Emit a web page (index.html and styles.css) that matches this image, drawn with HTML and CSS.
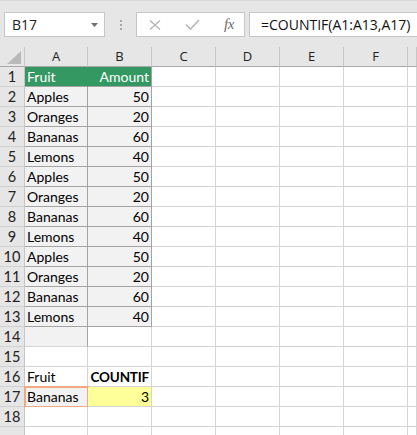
FILE: index.html
```html
<!DOCTYPE html>
<html>
<head>
<meta charset="utf-8">
<link rel="stylesheet" href="styles.css">
</head>
<body>
<div class="app">
  <div class="toolbar">
    <div class="namebox">
      <span class="name">B17</span>
      <svg class="dd" width="7" height="4" viewBox="0 0 7 4"><polygon points="0,0 7,0 3.5,4" fill="#707070"/></svg>
    </div>
    <div class="dots"><i></i><i></i><i></i></div>
    <div class="btns">
      <svg class="ico" width="12" height="10" viewBox="0 0 12 10"><path d="M1 0.5 L11 9.5 M11 0.5 L1 9.5" stroke="#b5b5b5" stroke-width="1.4" fill="none"/></svg>
      <svg class="ico" width="15" height="11" viewBox="0 0 15 11"><path d="M1 5.5 L5.5 10 L14 1" stroke="#b5b5b5" stroke-width="1.6" fill="none"/></svg>
      <span class="fx">fx</span>
    </div>
    <div class="formula">=COUNTIF(A1:A13,A17)</div>
  </div>
  <div class="grid">
    <div class="corner"><svg width="14" height="13" viewBox="0 0 14 13"><polygon points="14,0 14,13 0,13" fill="#b9b9b9"/></svg></div>
    <div class="ch">A</div><div class="ch">B</div><div class="ch">C</div><div class="ch">D</div><div class="ch">E</div><div class="ch">F</div><div class="ch last"></div>

    <div class="rh">1</div><div class="c g">Fruit</div><div class="c g r">Amount</div><div class="c"></div><div class="c"></div><div class="c"></div><div class="c"></div><div class="c last"></div>
    <div class="rh">2</div><div class="c t">Apples</div><div class="c t r">50</div><div class="c"></div><div class="c"></div><div class="c"></div><div class="c"></div><div class="c last"></div>
    <div class="rh">3</div><div class="c t">Oranges</div><div class="c t r">20</div><div class="c"></div><div class="c"></div><div class="c"></div><div class="c"></div><div class="c last"></div>
    <div class="rh">4</div><div class="c t">Bananas</div><div class="c t r">60</div><div class="c"></div><div class="c"></div><div class="c"></div><div class="c"></div><div class="c last"></div>
    <div class="rh">5</div><div class="c t">Lemons</div><div class="c t r">40</div><div class="c"></div><div class="c"></div><div class="c"></div><div class="c"></div><div class="c last"></div>
    <div class="rh">6</div><div class="c t">Apples</div><div class="c t r">50</div><div class="c"></div><div class="c"></div><div class="c"></div><div class="c"></div><div class="c last"></div>
    <div class="rh">7</div><div class="c t">Oranges</div><div class="c t r">20</div><div class="c"></div><div class="c"></div><div class="c"></div><div class="c"></div><div class="c last"></div>
    <div class="rh">8</div><div class="c t">Bananas</div><div class="c t r">60</div><div class="c"></div><div class="c"></div><div class="c"></div><div class="c"></div><div class="c last"></div>
    <div class="rh">9</div><div class="c t">Lemons</div><div class="c t r">40</div><div class="c"></div><div class="c"></div><div class="c"></div><div class="c"></div><div class="c last"></div>
    <div class="rh">10</div><div class="c t">Apples</div><div class="c t r">50</div><div class="c"></div><div class="c"></div><div class="c"></div><div class="c"></div><div class="c last"></div>
    <div class="rh">11</div><div class="c t">Oranges</div><div class="c t r">20</div><div class="c"></div><div class="c"></div><div class="c"></div><div class="c"></div><div class="c last"></div>
    <div class="rh">12</div><div class="c t">Bananas</div><div class="c t r">60</div><div class="c"></div><div class="c"></div><div class="c"></div><div class="c"></div><div class="c last"></div>
    <div class="rh">13</div><div class="c t">Lemons</div><div class="c t r">40</div><div class="c"></div><div class="c"></div><div class="c"></div><div class="c"></div><div class="c last"></div>
    <div class="rh">14</div><div class="c t14"></div><div class="c"></div><div class="c"></div><div class="c"></div><div class="c"></div><div class="c"></div><div class="c last"></div>
    <div class="rh">15</div><div class="c"></div><div class="c"></div><div class="c"></div><div class="c"></div><div class="c"></div><div class="c"></div><div class="c last"></div>
    <div class="rh">16</div><div class="c">Fruit</div><div class="c r b">COUNTIF</div><div class="c"></div><div class="c"></div><div class="c"></div><div class="c"></div><div class="c last"></div>
    <div class="rh">17</div><div class="c ref">Bananas</div><div class="c r yel">3</div><div class="c"></div><div class="c"></div><div class="c"></div><div class="c"></div><div class="c last"></div>
    <div class="rh">18</div><div class="c"></div><div class="c"></div><div class="c"></div><div class="c"></div><div class="c"></div><div class="c"></div><div class="c last"></div>
    <div class="rh"></div><div class="c"></div><div class="c"></div><div class="c"></div><div class="c"></div><div class="c"></div><div class="c"></div><div class="c last"></div>
  </div>
</div>
</body>
</html>
```

FILE: styles.css
```css
html, body {
  margin: 0;
  padding: 0;
  background: #ffffff;
  overflow: hidden;
}
.app {
  width: 417px;
  height: 435px;
  overflow: hidden;
}
.toolbar {
  height: 47px;
  box-sizing: border-box;
  background: #e6e6e6;
  border-top: 1px solid #d6d6d6;
  padding-top: 11px;
  display: flex;
  align-items: flex-start;
}
.namebox {
  margin-left: 4px;
  width: 101px;
  height: 25px;
  box-sizing: border-box;
  background: #fff;
  border: 1px solid #c6c6c6;
  display: flex;
  align-items: center;
  justify-content: space-between;
  padding: 0 6px 0 7px;
}
.name {
  font-family: "Open Sans", sans-serif;
  font-size: 14px;
  color: #222;
}
.dots {
  width: 31px;
  height: 25px;
  display: flex;
  flex-direction: column;
  align-items: center;
  justify-content: center;
  gap: 2px;
}
.dots i {
  display: block;
  width: 2px;
  height: 2px;
  background: #a8a8a8;
}
.btns {
  width: 109px;
  height: 25px;
  box-sizing: border-box;
  background: #fff;
  border: 1px solid #c6c6c6;
  display: flex;
  align-items: center;
  padding-left: 12px;
}
.btns .ico:first-child { margin-right: 24px; }
.btns .ico:nth-child(2) { margin-right: 24px; }
.fx {
  font-family: "Liberation Serif", serif;
  font-style: italic;
  font-size: 15px;
  color: #6e6e6e;
  letter-spacing: -0.5px;
}
.formula {
  margin-left: 4px;
  flex: 1;
  height: 25px;
  box-sizing: border-box;
  background: #fff;
  border: 1px solid #c6c6c6;
  border-right: none;
  padding-left: 11px;
  font-family: "Open Sans", sans-serif;
  font-size: 14px;
  line-height: 23px;
  color: #111;
  white-space: nowrap;
}
.grid {
  display: grid;
  grid-template-columns: 25px 63px 64px 64px 64px 64px 64px 9px;
  grid-auto-rows: 20px;
  font-family: "Lato", sans-serif;
  font-size: 14px;
  color: #000;
}
.grid > div {
  box-sizing: border-box;
  overflow: hidden;
  white-space: nowrap;
}
.corner {
  background: #e6e6e6;
  border-right: 1px solid #c8c8c8;
  border-bottom: 1px solid #a9a9a9;
  display: flex;
  align-items: flex-end;
  justify-content: flex-end;
  padding: 0 3px 2px 0;
}
.corner svg { display: block; }
.ch {
  background: #e6e6e6;
  border-right: 1px solid #c6c6c6;
  border-bottom: 1px solid #a9a9a9;
  text-align: center;
  font-family: "Open Sans", sans-serif;
  font-size: 13px;
  line-height: 19px;
  color: #222;
}
.rh {
  background: #e6e6e6;
  border-right: 1px solid #c6c6c6;
  border-bottom: 1px solid #d0d0d0;
  text-align: center;
  line-height: 20px;
  font-size: 14.5px;
  color: #222;
}
.c {
  background: #fff;
  border-right: 1px solid #d4d4d4;
  border-bottom: 1px solid #d4d4d4;
  padding: 0 2px;
  line-height: 20px;
}
.r { text-align: right; }
.b {
  font-weight: bold;
  font-size: 13.5px;
  letter-spacing: -0.2px;
}
.t {
  background: #f2f2f2;
  border-right-color: #a3a3a3;
  border-bottom-color: #a3a3a3;
}
.g {
  background: #349862;
  color: #fff;
  border-right-color: #349862;
  border-bottom-color: #a3a3a3;
}
.g.r { border-right-color: #a3a3a3; }
.t14 {
  background: #f2f2f2;
  border-right-color: #a3a3a3;
}
.ref {
  background: #f2f2f2;
  outline: 2px solid #f2a97f;
  outline-offset: -1px;
}
.yel { background: #ffff99; }
```
